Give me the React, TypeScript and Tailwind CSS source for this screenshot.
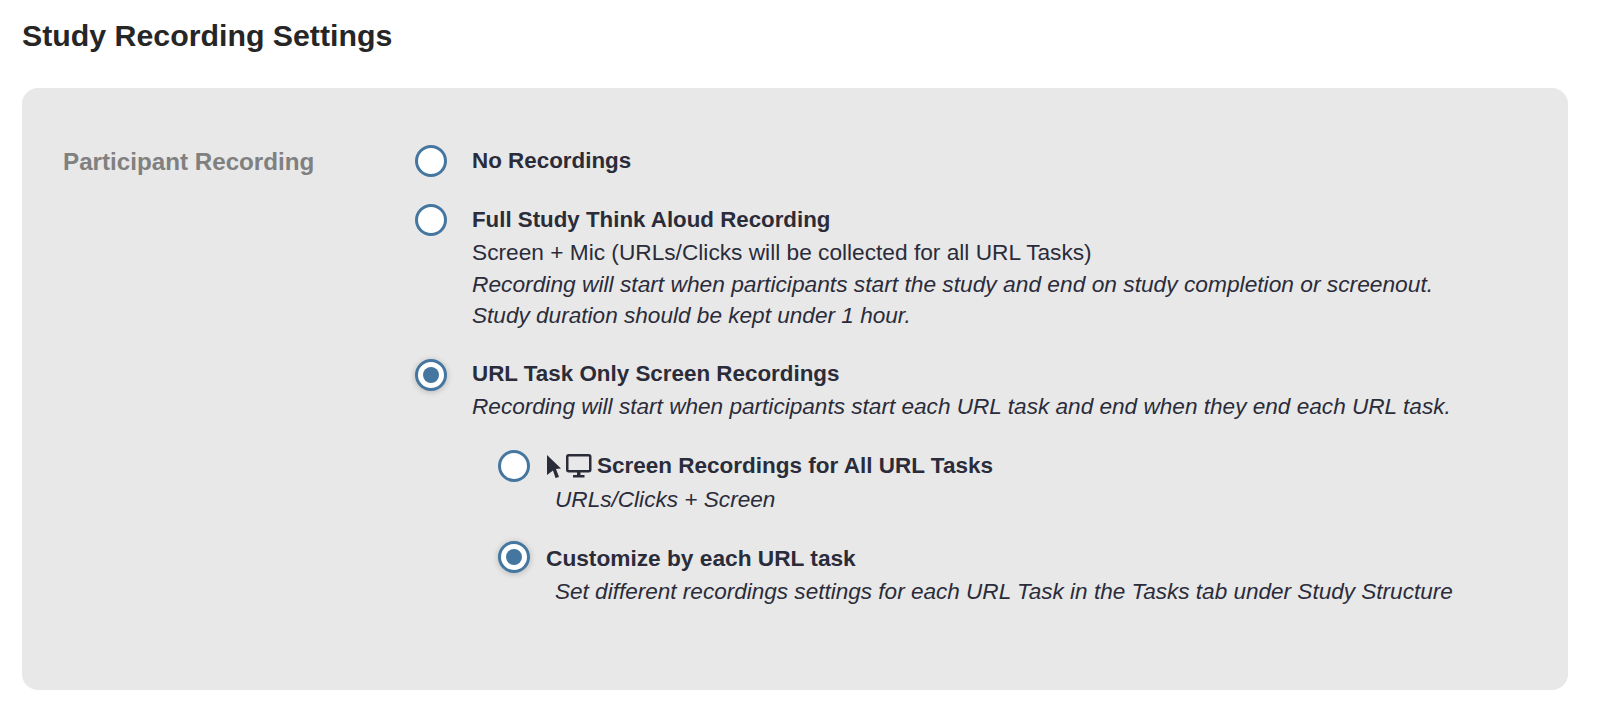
import React from "react";

function Radio({ on }: { on?: boolean }) {
  return (
    <span className={`flex h-[32px] w-[32px] shrink-0 items-center justify-center rounded-full border-[3px] border-[#44769f] bg-white ${on ? "shadow-[0_1px_6px_rgba(0,0,0,0.22)]" : ""}`}>
      {on && <span className="h-[16px] w-[16px] rounded-full bg-[#44769f]" />}
    </span>
  );
}

export default function App() {
  return (
    <div className="h-[705px] w-[1600px] overflow-hidden bg-white font-['Liberation_Sans',Arial,sans-serif] text-[#2b2c3a]">
      <h1 className="pl-[22px] pt-[17px] text-[30.3px] font-bold leading-[38px] text-[#262626]">Study Recording Settings</h1>
      <div className="mx-[22px] mt-[33px] flex h-[602px] w-[1546px] rounded-[16px] bg-[#e8e8e8] pl-[41px] pt-[57px]">
        <div className="w-[352px] pt-[1px] text-[24.2px] font-bold leading-[32px] text-[#808080]">Participant Recording</div>
        <div className="flex flex-col text-[22.75px] leading-[32px]">
          <div className="flex gap-[25px]">
            <Radio />
            <b className="text-[22.4px]">No Recordings</b>
          </div>
          <div className="mt-[27px] flex gap-[25px]">
            <Radio />
            <div>
              <b className="block text-[22.3px]">Full Study Think Aloud Recording</b>
              <div className="text-[22.7px]">Screen + Mic (URLs/Clicks will be collected for all URL Tasks)</div>
              <i className="block">Recording will start when participants start the study and end on study completion or screenout.</i>
              <i className="block text-[22.6px]">Study duration should be kept under 1 hour.</i>
            </div>
          </div>
          <div className="mt-[27px] flex gap-[25px]">
            <Radio on />
            <div>
              <b className="-mt-[1px] block text-[22.4px]">URL Task Only Screen Recordings</b>
              <i className="mt-[1px] block text-[22.6px]">Recording will start when participants start each URL task and end when they end each URL task.</i>
            </div>
          </div>
          <div className="ml-[83px] mt-[27px] flex gap-[16px]">
            <Radio />
            <div>
              <div className="flex items-center">
                <svg width="16" height="25" viewBox="0 0 16 25" className="mr-[4px]">
                  <path d="M1 1 L15 14.5 L10 15 L13 23 L9.5 24 L7 16.5 L1 21 Z" fill="#2b2c3a" />
                </svg>
                <svg width="26" height="24" viewBox="0 0 26 24" className="mr-[5px]">
                  <rect x="1.25" y="1.25" width="23" height="16" rx="1.5" fill="none" stroke="#2b2c3a" strokeWidth="2.5" />
                  <path d="M11 17h3.5v4h-3.5z M7 21h11.5v2.5H7z" fill="#2b2c3a" />
                </svg>
                <b className="text-[22.5px]">Screen Recordings for All URL Tasks</b>
              </div>
              <i className="ml-[9px] block pt-[2px] text-[22.6px]">URLs/Clicks + Screen</i>
            </div>
          </div>
          <div className="ml-[83px] mt-[25px] flex gap-[16px]">
            <Radio on />
            <div className="pt-[1px]">
              <b className="block text-[22.7px]">Customize by each URL task</b>
              <i className="ml-[9px] mt-[2px] block text-[22.55px]">Set different recordings settings for each URL Task in the Tasks tab under Study Structure</i>
            </div>
          </div>
        </div>
      </div>
    </div>
  );
}
